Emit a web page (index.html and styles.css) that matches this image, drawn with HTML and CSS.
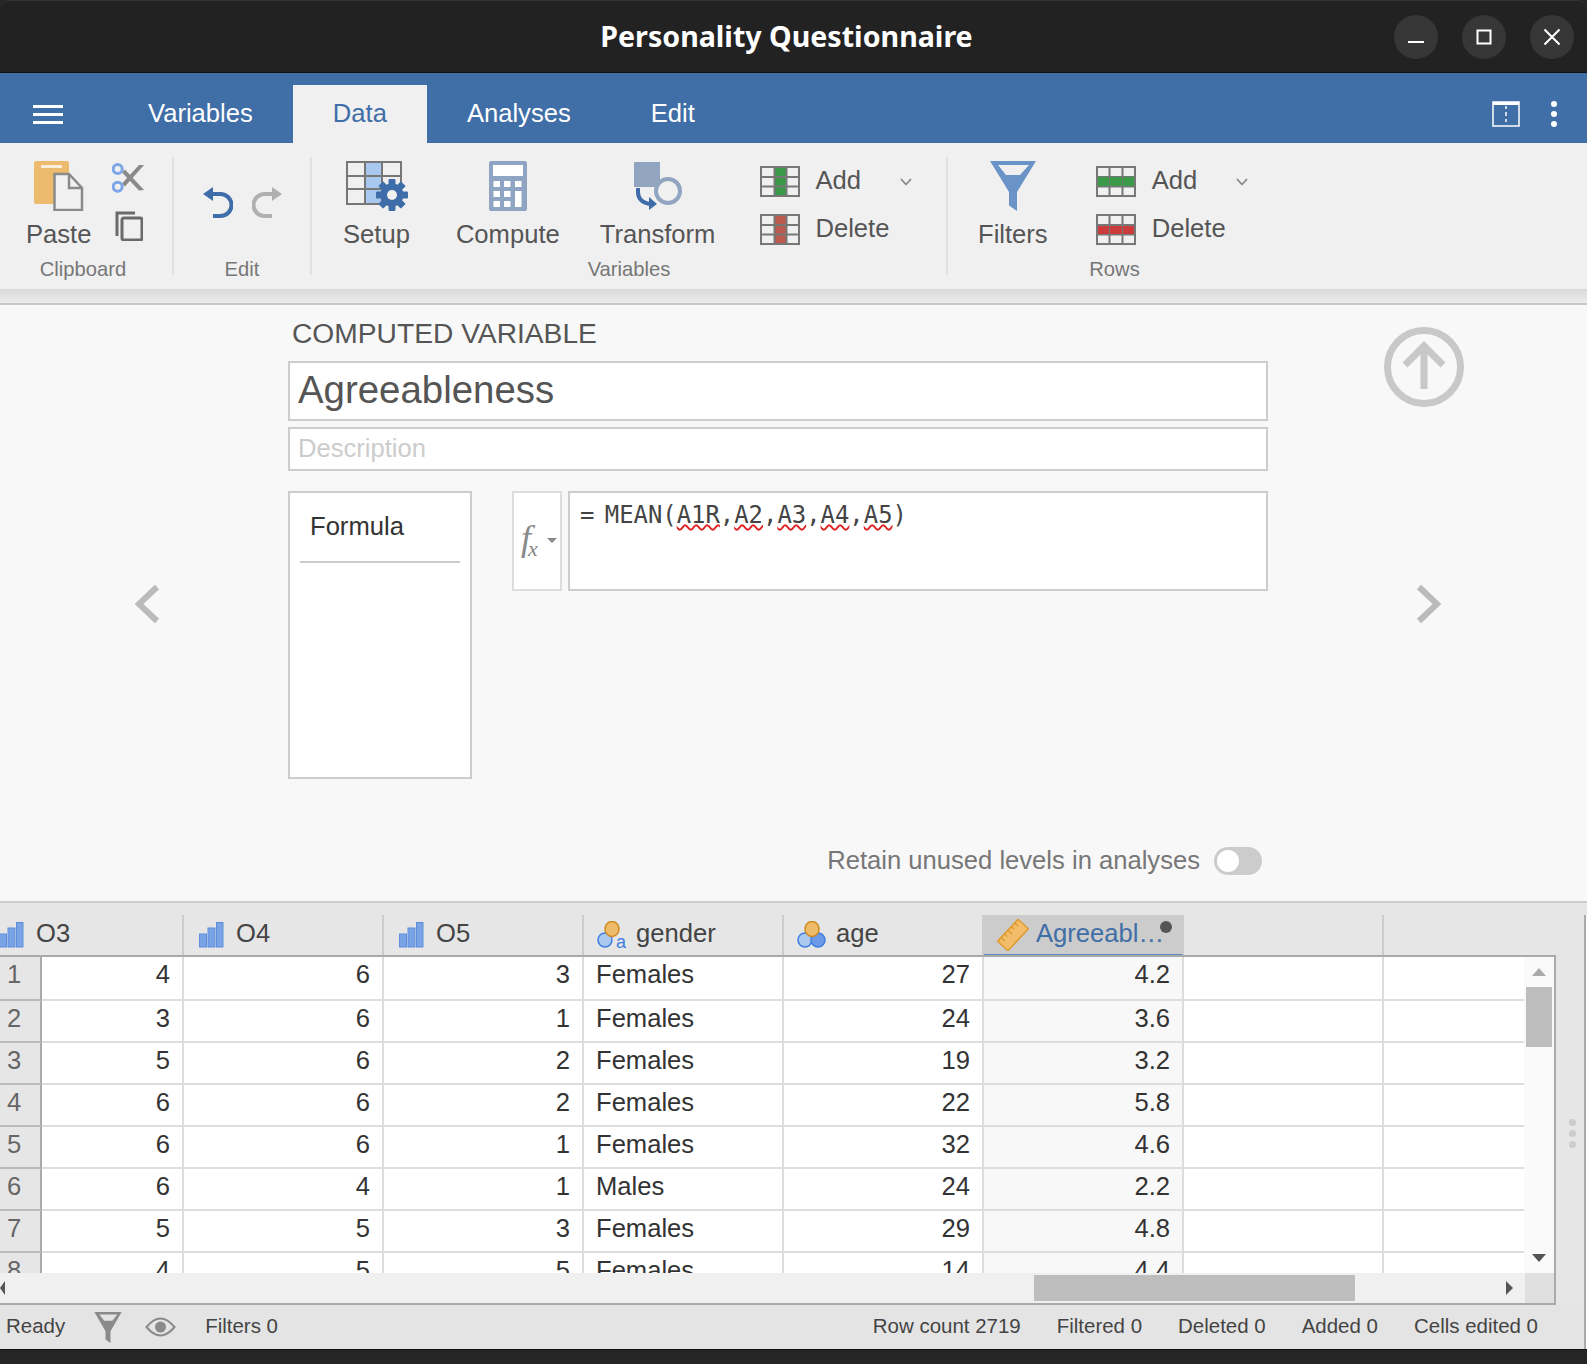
FILE: index.html
```html
<!DOCTYPE html>
<html lang="en">
<head>
<meta charset="utf-8">
<title>Personality Questionnaire</title>
<link rel="stylesheet" href="styles.css">
</head>
<body>
<div class="window">
  <header class="titlebar">
    <div class="title">Personality Questionnaire</div>
    <div class="winctl">
      <button class="wbtn"><svg width="18" height="18" viewBox="0 0 18 18"><rect x="1" y="13" width="16" height="2" fill="#fff"/></svg></button>
      <button class="wbtn"><svg width="18" height="18" viewBox="0 0 18 18"><rect x="2.500" y="2.500" width="13" height="13" fill="none" stroke="#fff" stroke-width="2"/></svg></button>
      <button class="wbtn"><svg width="18" height="18" viewBox="0 0 18 18"><path d="M1.500 1.500 16.500 16.500M16.500 1.500 1.500 16.500" stroke="#fff" stroke-width="2" fill="none"/></svg></button>
    </div>
  </header>

  <nav class="tabbar">
    <div class="burger"><span></span><span></span><span></span></div>
    <div class="tab">Variables</div>
    <div class="tab active">Data</div>
    <div class="tab">Analyses</div>
    <div class="tab">Edit</div>
    <div class="tabtools">
      <svg width="28" height="26" viewBox="0 0 28 26"><rect x="1" y="1" width="26" height="24" fill="none" stroke="#fff" stroke-width="1.500"/><rect x="1" y="1" width="26" height="3" fill="#fff"/><path d="M14 5V8M14 11V15M14 18V21" stroke="#fff" stroke-width="1.500"/></svg>
      <div class="vdots"><span></span><span></span><span></span></div>
    </div>
  </nav>

  <section class="ribbon">
    <div class="group g-clip">
      <div class="tools">
        <div class="big">
          <svg width="50" height="50" viewBox="0 0 50 50"><rect width="35" height="43" rx="2" fill="#ecbb6d"/><rect x="7" y="4" width="21" height="3" fill="#fbeed8"/><path d="M20.500 13H35L48 27V49H20.500Z" fill="#f0f0f0" stroke="#8a8a8a" stroke-width="2.500"/><path d="M35 13V27H48" fill="none" stroke="#8a8a8a" stroke-width="2.500"/></svg>
          <span>Paste</span>
        </div>
        <div class="smalls">
          <svg width="32" height="30" viewBox="0 0 32 30"><polygon points="10,9.500 13,6.500 32,27 27,27.500" fill="#8a8a8a"/><polygon points="10,20.500 13,23.500 32,2 27,2" fill="#8a8a8a"/><circle cx="5.700" cy="6" r="4.500" fill="#f0f0f0" stroke="#7ca6e8" stroke-width="3"/><circle cx="5.700" cy="23.700" r="4.500" fill="#f0f0f0" stroke="#7ca6e8" stroke-width="3"/></svg>
          <svg class="copy" width="28" height="30" viewBox="0 0 28 30"><path d="M2 25V2H20" fill="none" stroke="#6a6a6a" stroke-width="3"/><rect x="7" y="7" width="20" height="22" rx="2" fill="none" stroke="#6a6a6a" stroke-width="3"/></svg>
        </div>
      </div>
      <div class="glabel">Clipboard</div>
    </div>
    <div class="sep"></div>
    <div class="group g-edit">
      <div class="tools">
        <svg width="30" height="31" viewBox="0 0 30 31"><polygon points="0,7 10,0 10,14" fill="#3e6da9"/><path d="M9 7H17.500a11 11 0 0 1 0 22H10" fill="none" stroke="#3e6da9" stroke-width="4"/></svg>
        <svg width="30" height="31" viewBox="0 0 30 31"><polygon points="30,7 20,0 20,14" fill="#b0b0b0"/><path d="M21 7H12.500a11 11 0 0 0 0 22H20" fill="none" stroke="#b0b0b0" stroke-width="4"/></svg>
      </div>
      <div class="glabel">Edit</div>
    </div>
    <div class="sep"></div>
    <div class="group g-vars">
      <div class="tools">
        <div class="big b-setup">
          <svg width="62" height="50" viewBox="0 0 62 50"><rect x="19" y="1" width="17" height="42" fill="#a8c8f0"/><path d="M1 1H55V43H1ZM19 1V43M36 1V43M1 15H55M1 28H55" fill="none" stroke="#777" stroke-width="2"/><g fill="#3e6da9"><circle cx="46" cy="34" r="11.500"/><rect x="42.500" y="18" width="7" height="32" rx="1"/><rect x="42.500" y="18" width="7" height="32" rx="1" transform="rotate(45 46 34)"/><rect x="42.500" y="18" width="7" height="32" rx="1" transform="rotate(90 46 34)"/><rect x="42.500" y="18" width="7" height="32" rx="1" transform="rotate(135 46 34)"/></g><circle cx="46" cy="34" r="5" fill="#f0f0f0"/></svg>
          <span>Setup</span>
        </div>
        <div class="big b-compute">
          <svg width="38" height="50" viewBox="0 0 38 50"><rect width="38" height="50" rx="2" fill="#8fa5c3"/><g fill="#fff"><rect x="4" y="4" width="30" height="11"/><rect x="4.500" y="20" width="6.500" height="6"/><rect x="15" y="20" width="6.500" height="6"/><rect x="26" y="20" width="6.500" height="6"/><rect x="4.500" y="30" width="6.500" height="6"/><rect x="15" y="30" width="6.500" height="6"/><rect x="26" y="30" width="6.500" height="16"/><rect x="4.500" y="40" width="6.500" height="6"/><rect x="15" y="40" width="6.500" height="6"/></g></svg>
          <span>Compute</span>
        </div>
        <div class="big b-transform">
          <svg width="50" height="50" viewBox="0 0 50 50"><rect x="1" y="1" width="26" height="25" fill="#92a5c0"/><circle cx="35" cy="30" r="12" fill="#f0f0f0" stroke="#92a5c0" stroke-width="4"/><path d="M5 27V31Q5 41 17 43" fill="none" stroke="#3e6da9" stroke-width="4"/><polygon points="16,36 24,43 16,49" fill="#3e6da9"/></svg>
          <span>Transform</span>
        </div>
        <div class="list l-vars">
          <div class="item">
            <svg width="40" height="31" viewBox="0 0 40 31"><rect x="15" y="1" width="11" height="29" fill="#3a9a48"/><path d="M1 1H39V30H1ZM14.500 1V30M26.500 1V30M1 11H39M1 20.500H39" fill="none" stroke="#777" stroke-width="2"/></svg>
            <span>Add</span>
            <svg class="chev" width="12" height="8" viewBox="0 0 12 8"><path d="M1 1 6 6.500 11 1" fill="none" stroke="#888" stroke-width="1.800"/></svg>
          </div>
          <div class="item">
            <svg width="40" height="31" viewBox="0 0 40 31"><rect x="15" y="1" width="11" height="29" fill="#bd5a4f"/><path d="M1 1H39V30H1ZM14.500 1V30M26.500 1V30M1 11H39M1 20.500H39" fill="none" stroke="#777" stroke-width="2"/></svg>
            <span>Delete</span>
          </div>
        </div>
      </div>
      <div class="glabel">Variables</div>
    </div>
    <div class="sep"></div>
    <div class="group g-rows">
      <div class="tools">
        <div class="big">
          <svg width="46" height="50" viewBox="0 0 46 50"><polygon points="0,0 46,0 27,31 27,50 19,44.500 19,31" fill="#6a93c7"/><polygon points="8,4 39,4 30,14 16,14" fill="#f0f0f0"/></svg>
          <span>Filters</span>
        </div>
        <div class="list l-rows">
          <div class="item">
            <svg width="40" height="31" viewBox="0 0 40 31"><path d="M1 1H39V30H1ZM13.500 1V30M26.500 1V30M1 11H39M1 20.500H39" fill="none" stroke="#777" stroke-width="2"/><rect x="2" y="11" width="36" height="9" fill="#3a9a48"/><path d="M13.500 11V20M26.500 11V20" stroke="#777" stroke-width="1"/></svg>
            <span>Add</span>
            <svg class="chev" width="12" height="8" viewBox="0 0 12 8"><path d="M1 1 6 6.500 11 1" fill="none" stroke="#888" stroke-width="1.800"/></svg>
          </div>
          <div class="item">
            <svg width="40" height="31" viewBox="0 0 40 31"><path d="M1 1H39V30H1ZM13.500 1V30M26.500 1V30M1 11H39M1 20.500H39" fill="none" stroke="#777" stroke-width="2"/><rect x="2" y="12" width="36" height="8" fill="#cc3b3b"/><path d="M13.500 12V20M26.500 12V20" stroke="#777" stroke-width="1"/></svg>
            <span>Delete</span>
          </div>
        </div>
      </div>
      <div class="glabel">Rows</div>
    </div>
  </section>
  <div class="ribbon-shadow"></div>

  <main class="editor">
    <div class="side-left">
      <svg width="26" height="40" viewBox="0 0 26 40"><path d="M23 3 5 20 23 37" fill="none" stroke="#bbb" stroke-width="6"/></svg>
    </div>
    <div class="form">
      <div class="heading">COMPUTED VARIABLE</div>
      <div class="namebox">Agreeableness</div>
      <div class="descbox">Description</div>
      <div class="formula-row">
        <div class="formula-list"><div class="formula-tab">Formula</div></div>
        <div class="fxbox"><span class="fx">f<sub>x</sub></span><i class="caret"></i></div>
        <div class="expr">= MEAN(<u>A1R</u>,<u>A2</u>,<u>A3</u>,<u>A4</u>,<u>A5</u>)</div>
      </div>
      <div class="retain">
        <span>Retain unused levels in analyses</span>
        <div class="toggle"><i></i></div>
      </div>
    </div>
    <div class="side-right">
      <svg width="80" height="80" viewBox="0 0 80 80"><circle cx="40" cy="40" r="36.500" fill="none" stroke="#c8c8c8" stroke-width="7"/><path d="M40 62V19M21 38 40 19 59 38" fill="none" stroke="#c8c8c8" stroke-width="7"/></svg>
      <svg class="next" width="26" height="40" viewBox="0 0 26 40"><path d="M3 3 21 20 3 37" fill="none" stroke="#bbb" stroke-width="6"/></svg>
    </div>
  </main>

  <section class="sheet">
    <div class="sheet-main">
      <div class="thead">
        <div class="th th-first"><svg class="ic" width="25" height="26" viewBox="0 0 24 26"><use href="#bars"/></svg><span>O3</span></div>
        <div class="th"><svg class="ic" width="25" height="26" viewBox="0 0 24 26"><use href="#bars"/></svg><span>O4</span></div>
        <div class="th"><svg class="ic" width="25" height="26" viewBox="0 0 24 26"><use href="#bars"/></svg><span>O5</span></div>
        <div class="th th-nom"><svg class="ic" width="30" height="28" viewBox="0 0 30 28"><circle cx="8" cy="19" r="7" fill="#a9c7ef" stroke="#3f7fe0" stroke-width="1.500"/><ellipse cx="15" cy="8" rx="7" ry="7.500" fill="#eebb6a" stroke="#d08a20" stroke-width="1.500"/><text x="19" y="27" class="ic-a">a</text></svg><span>gender</span></div>
        <div class="th th-nom"><svg class="ic" width="30" height="28" viewBox="0 0 30 28"><circle cx="8" cy="19" r="7" fill="#a9c7ef" stroke="#3f7fe0" stroke-width="1.500"/><circle cx="21" cy="19" r="7" fill="#6c9ae6" stroke="#3f7fe0" stroke-width="1.500"/><ellipse cx="15" cy="8" rx="7" ry="7.500" fill="#eebb6a" stroke="#d08a20" stroke-width="1.500"/></svg><span>age</span></div>
        <div class="th th-sel"><svg class="ic" width="32" height="32" viewBox="0 0 32 32"><g transform="rotate(-47 16 16)"><rect x="1" y="9" width="30" height="14" fill="#f2bd6b" stroke="#e09a2c" stroke-width="1.500"/><path d="M6 9V14M11 9V13M16 9V15M21 9V13M26 9V14" stroke="#e09a2c" stroke-width="1.300"/></g></svg><span>Agreeabl…</span><i class="dot"></i></div>
        <div class="th"></div>
        <div class="th th-rest"></div>
      </div>
      <div class="tbody">
        <div class="rows" id="rows">
          <div class="row first"><div class="num">1</div><div class="td c-o3">4</div><div class="td">6</div><div class="td">3</div><div class="td txt">Females</div><div class="td">27</div><div class="td sel">4.2</div><div class="td"></div><div class="td rest"></div></div>
          <div class="row"><div class="num">2</div><div class="td c-o3">3</div><div class="td">6</div><div class="td">1</div><div class="td txt">Females</div><div class="td">24</div><div class="td sel">3.6</div><div class="td"></div><div class="td rest"></div></div>
          <div class="row"><div class="num">3</div><div class="td c-o3">5</div><div class="td">6</div><div class="td">2</div><div class="td txt">Females</div><div class="td">19</div><div class="td sel">3.2</div><div class="td"></div><div class="td rest"></div></div>
          <div class="row"><div class="num">4</div><div class="td c-o3">6</div><div class="td">6</div><div class="td">2</div><div class="td txt">Females</div><div class="td">22</div><div class="td sel">5.8</div><div class="td"></div><div class="td rest"></div></div>
          <div class="row"><div class="num">5</div><div class="td c-o3">6</div><div class="td">6</div><div class="td">1</div><div class="td txt">Females</div><div class="td">32</div><div class="td sel">4.6</div><div class="td"></div><div class="td rest"></div></div>
          <div class="row"><div class="num">6</div><div class="td c-o3">6</div><div class="td">4</div><div class="td">1</div><div class="td txt">Males</div><div class="td">24</div><div class="td sel">2.2</div><div class="td"></div><div class="td rest"></div></div>
          <div class="row"><div class="num">7</div><div class="td c-o3">5</div><div class="td">5</div><div class="td">3</div><div class="td txt">Females</div><div class="td">29</div><div class="td sel">4.8</div><div class="td"></div><div class="td rest"></div></div>
          <div class="row"><div class="num">8</div><div class="td c-o3">4</div><div class="td">5</div><div class="td">5</div><div class="td txt">Females</div><div class="td">14</div><div class="td sel">4.4</div><div class="td"></div><div class="td rest"></div></div>
        </div>
        <div class="vscroll"><i class="tri-up"></i><div class="vthumb"></div><i class="tri-down"></i></div>
      </div>
      <div class="hscroll">
        <i class="tri-left"></i>
        <div class="hthumb"></div>
        <i class="tri-right"></i>
        <div class="corner"></div>
      </div>
    </div>
    <div class="grip"><span></span><span></span><span></span></div>
  </section>

  <footer class="status">
    <span class="ready">Ready</span>
    <svg class="st-filter" width="28" height="31" viewBox="0 0 44 50"><polygon points="0,0 44,0 26,31 26,50 18,44.500 18,31" fill="#8a8a8a"/><polygon points="8,4 37,4 29,14 16,14" fill="#e4e4e4"/></svg>
    <svg class="st-eye" width="31" height="20" viewBox="0 0 31 20"><path d="M1.500 10Q15.500 -7 29.500 10 15.500 27 1.500 10Z" fill="none" stroke="#8a8a8a" stroke-width="2"/><circle cx="15.500" cy="10" r="5.500" fill="#8a8a8a"/></svg>
    <span class="filters">Filters 0</span>
    <div class="counts"><span>Row count 2719</span><span>Filtered 0</span><span>Deleted 0</span><span>Added 0</span><span>Cells edited 0</span></div>
  </footer>
  <div class="bottom-edge"></div>
  <div class="panel-edge"></div>
</div>

<svg class="defs" width="0" height="0"><defs><g id="bars"><rect x="0" y="12" width="7" height="13" fill="#7aa3e6" stroke="#5f8fdc"/><rect x="8.500" y="6" width="7" height="19" fill="#7aa3e6" stroke="#5f8fdc"/><rect x="17" y="0.500" width="6.500" height="24.500" fill="#7aa3e6" stroke="#5f8fdc"/></g></defs></svg>
</body>
</html>
```

FILE: styles.css
```css
* { box-sizing: border-box; }
html, body { margin: 0; padding: 0; background: #262626; }
body { font-family: "Liberation Sans", Arial, sans-serif; color: #555; }
.window { width: 1587px; height: 1364px; display: flex; flex-direction: column; overflow: hidden; position: relative; }
.defs { position: absolute; }

/* title bar */
.titlebar { flex: 0 0 73px; background: #222; border-top: 1px solid #333; border-bottom: 1px solid #111; border-radius: 10px 10px 0 0; display: flex; align-items: center; padding-left: 179px; }
.title { flex: 1; padding-bottom: 2px; text-align: center; color: #fff; font-family: "Noto Sans", sans-serif; font-weight: 700; font-size: 28.600px; }
.winctl { display: flex; gap: 24px; padding-right: 13px; }
.wbtn { width: 44px; height: 44px; padding: 0; border: 0; border-radius: 50%; background: #373737; display: flex; align-items: center; justify-content: center; }

/* tab bar */
.tabbar { flex: 0 0 70px; background: #406ea7; display: flex; align-items: flex-end; }
.burger { width: 108px; height: 58px; padding: 20px 0 0 33px; display: flex; flex-direction: column; gap: 5px; }
.burger span { display: block; width: 30px; height: 3px; background: #fff; }
.tab { height: 58px; line-height: 56px; padding: 0 40px; font-size: 25.600px; color: #fff; }
.tab.active { background: #f0f0f0; color: #406ea7; }
.tabtools { margin-left: auto; height: 70px; display: flex; align-items: center; padding: 11px 30px 0 0; gap: 31px; }
.vdots { display: flex; flex-direction: column; gap: 4px; }
.vdots span { width: 6px; height: 6px; border-radius: 50%; background: #fff; }

/* ribbon */
.ribbon { flex: 0 0 146px; background: #f0f0f0; display: flex; align-items: flex-start; }
.group { display: flex; flex-direction: column; }
.tools { height: 114px; display: flex; align-items: flex-start; padding-top: 18px; }
.glabel { line-height: 24px; font-size: 20.200px; text-align: center; color: #777; }
.sep { width: 2px; height: 118px; margin-top: 14px; background: #e0e0e0; }
.big { display: flex; flex-direction: column; align-items: center; flex: none; }
.big svg { display: block; }
.big span { margin-top: 8px; line-height: 30px; font-size: 25.600px; color: #555; white-space: nowrap; }
.b-setup svg { margin-left: 2px; }
.g-clip { width: 172px; }
.g-clip .tools { padding-left: 26px; }
.g-clip .glabel { padding-right: 6px; }
.smalls { margin-left: 21px; padding-top: 2px; display: flex; flex-direction: column; gap: 18px; }
.smalls svg { display: block; }
.smalls .copy { margin-left: 3px; }
.g-edit { width: 136px; }
.g-edit .tools { padding: 44px 0 0 29px; gap: 19px; }
.g-vars { width: 634px; }
.g-vars .tools { padding-left: 31px; }
.b-compute { margin-left: 46px; }
.b-transform { margin-left: 40px; }
.list { padding-top: 5px; display: flex; flex-direction: column; gap: 17px; }
.l-vars { margin-left: 45px; }
.l-vars .item span { margin-left: 15px; }
.l-rows { margin-left: 48px; }
.item { display: flex; align-items: center; height: 31px; font-size: 25.600px; color: #555; }
.item svg { display: block; flex: none; }
.item span { margin: 0 0 2px 16px; }
.item .chev { margin-left: 39px; }
.g-rows { width: 333px; }
.g-rows .tools { padding-left: 30px; }
.ribbon-shadow { flex: 0 0 16px; background: linear-gradient(#d9d9d9, #ececec 88%, #c9c9c9 88%, #c9c9c9); }

/* editor */
.editor { flex: 0 0 596px; background: #f8f8f8; display: flex; }
.side-left { width: 288px; padding: 2px 0 0 134px; display: flex; align-items: center; }
.form { width: 980px; display: flex; flex-direction: column; }
.heading { margin-top: 12px; padding-left: 4px; line-height: 32px; font-size: 28.200px; color: #555; }
.namebox { margin-top: 12px; height: 60px; padding-left: 8px; line-height: 54px; font-size: 38.400px; color: #555; background: #fff; border: 2px solid #ccc; }
.descbox { margin-top: 6px; height: 44px; padding-left: 8px; line-height: 39px; font-size: 25.600px; color: #ccc; background: #fff; border: 2px solid #ccc; }
.formula-row { margin-top: 20px; display: flex; align-items: flex-start; }
.formula-list { width: 184px; height: 288px; padding: 0 10px; background: #fff; border: 2px solid #ccc; }
.formula-tab { height: 70px; padding: 18px 0 0 10px; font-size: 25.600px; line-height: 30px; color: #333; border-bottom: 2px solid #ccc; }
.fxbox { width: 50px; height: 100px; margin-left: 40px; position: relative; display: flex; align-items: center; padding: 0 0 6px 7px; background: #fff; border: 2px solid #ddd; }
.fx { font-family: "Liberation Serif", serif; font-style: italic; font-size: 36px; color: #888; line-height: 1; }
.fx sub { font-size: 22px; line-height: 0; vertical-align: -6px; margin-left: -3px; }
.caret { position: absolute; left: 33px; top: 45px; border: 5px solid transparent; border-top: 5px solid #888; border-bottom: 0; }
.expr { flex: 1; height: 100px; margin-left: 6px; padding: 6px 0 0 10px; font-family: "DejaVu Sans Mono", monospace; font-size: 23.900px; word-spacing: -4px; line-height: 32px; color: #444; background: #fff; border: 2px solid #ccc; }
.expr u { text-decoration: underline wavy #e02020 1.500px; text-underline-offset: 1px; }
.retain { margin-top: 68px; height: 28px; padding-right: 6px; display: flex; align-items: center; justify-content: flex-end; gap: 14px; font-size: 25.600px; color: #777; }
.retain span { margin-bottom: 2px; }
.toggle { width: 48px; height: 28px; padding: 3px; border-radius: 14px; background: #ccc; }
.toggle i { display: block; width: 22px; height: 22px; border-radius: 50%; background: #fff; }
.side-right { flex: 1; padding: 22px 0 0 116px; display: flex; flex-direction: column; }
.side-right .next { margin: 177px 0 0 32px; }

/* sheet */
.sheet { flex: 0 0 404px; display: flex; background: #e6e6e6; border-top: 2px solid #ccc; }
.sheet-main { width: 1556px; display: flex; flex-direction: column; }
.thead { height: 54px; padding-top: 12px; display: flex; border-bottom: 2px solid #aaa; overflow: hidden; font-size: 25.600px; color: #444; }
.th { flex: 0 0 200px; height: 40px; padding-left: 15px; display: flex; align-items: center; border-right: 2px solid #ccc; position: relative; }
.th-first { margin-left: -16px; }
.th-rest { flex: 1 0 auto; border-right: 0; }
.ic { flex: none; }
.th span { margin: 0 0 3px 12px; }
.th-nom { padding-left: 13px; }
.th-nom span { margin-left: 9px; }
.ic-a { font-size: 18px; fill: #3f7fe0; font-family: "Liberation Sans", sans-serif; }
.th-sel { background: #ccc; border-bottom: 3px solid #5b8ac4; height: 42px; color: #406ea7; padding-left: 13px; }
.th-sel span { margin-left: 7px; white-space: nowrap; }
.dot { position: absolute; right: 10px; top: 6px; width: 12px; height: 12px; border-radius: 50%; background: #555; }
.tbody { height: 316px; display: flex; background: #fff; border-right: 2px solid #aaa; }
.rows { flex: 1; min-width: 0; overflow: hidden; }
.row { height: 42px; display: flex; font-size: 25.600px; line-height: 34px; color: #333; border-bottom: 2px solid #ddd; }
.row.first { height: 44px; }
.num { flex: 0 0 42px; padding-left: 7px; background: #e6e6e6; color: #666; border-right: 2px solid #aaa; margin-bottom: -2px; border-bottom: 2px solid #bbb; }
.td { flex: 0 0 200px; padding-right: 12px; text-align: right; border-right: 2px solid #ddd; }
.c-o3 { flex-basis: 142px; }
.txt { text-align: left; padding-left: 12px; }
.sel { background: #f8f8f8; }
.rest { flex: 1 0 auto; border-right: 0; }
.vscroll { flex: 0 0 30px; padding-top: 11px; display: flex; flex-direction: column; align-items: center; background: #fafafa; }
.tri-up { border: 7px solid transparent; border-bottom: 8px solid #aaa; border-top: 0; }
.vthumb { width: 26px; height: 60px; margin-top: 11px; background: #bdbdbd; }
.tri-down { margin-top: auto; margin-bottom: 11px; border: 7px solid transparent; border-top: 8px solid #555; border-bottom: 0; }
.hscroll { height: 32px; display: flex; align-items: center; background: #f0f0f0; border-bottom: 2px solid #aaa; border-right: 2px solid #aaa; }
.tri-left { border: 7px solid transparent; border-right: 5px solid #555; border-left: 0; }
.hthumb { width: 321px; height: 26px; margin-left: 1029px; background: #bdbdbd; }
.tri-right { margin-left: 151px; border: 7px solid transparent; border-left: 7px solid #555; border-right: 0; }
.corner { margin-left: auto; width: 29px; height: 30px; background: #e0e0e0; }
.grip { flex: 1; padding: 216px 0 0 13px; display: flex; flex-direction: column; gap: 4px; background: #e6e6e6; }
.grip span { width: 7px; height: 7px; border-radius: 50%; background: #ccc; }

/* status */
.status { flex: 0 0 44px; padding-left: 6px; display: flex; align-items: center; font-size: 20.480px; color: #444; background: #e4e4e4; }
.status span { margin-bottom: 2px; }
.st-filter { margin-left: 29px; }
.st-eye { margin-left: 23px; }
.filters { margin-left: 29px; }
.counts { margin-left: auto; padding-right: 49px; display: flex; gap: 36px; }
.bottom-edge { flex: 1; background: #262626; border-top: 1px solid #111; }
.panel-edge { position: absolute; left: 1584px; top: 915px; width: 3px; height: 434px; background: #fafafa; border-left: 2px solid #aaa; }
```
